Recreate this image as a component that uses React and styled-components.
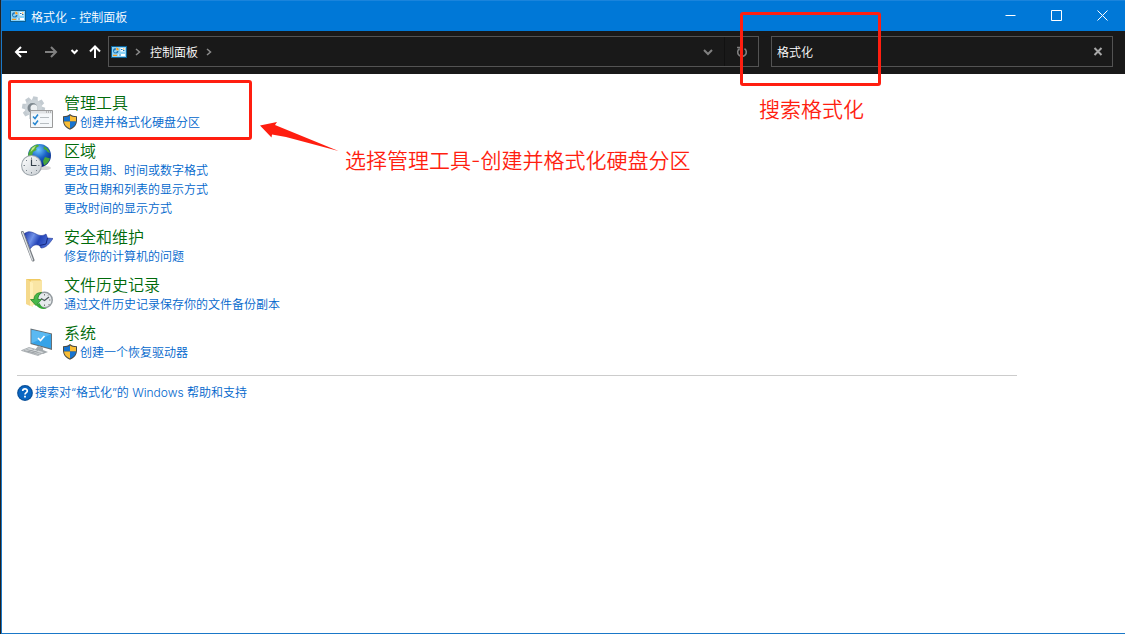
import React, { useState } from 'react';
import styled, { createGlobalStyle } from 'styled-components';

const results = [
	{ title: '管理工具', icon: ToolsIcon, marked: true, links: [{ text: '创建并格式化硬盘分区', shield: true }] },
	{
		title: '区域',
		icon: RegionIcon,
		links: [{ text: '更改日期、时间或数字格式' }, { text: '更改日期和列表的显示方式' }, { text: '更改时间的显示方式' }],
	},
	{ title: '安全和维护', icon: FlagIcon, links: [{ text: '修复你的计算机的问题' }] },
	{ title: '文件历史记录', icon: HistoryIcon, links: [{ text: '通过文件历史记录保存你的文件备份副本' }] },
	{ title: '系统', icon: SystemIcon, links: [{ text: '创建一个恢复驱动器', shield: true }] },
];

function App() {
	const [keyword, setKeyword] = useState('格式化');

	return (
		<Desktop>
			<GlobalStyle />
			<Window>
				<TitleBar>
					<PanelIcon />
					<Title>格式化 - 控制面板</Title>
					<WindowButton aria-label="最小化">
						<LineIcon d="M1.5 5.5H11.5" />
					</WindowButton>
					<WindowButton aria-label="最大化">
						<LineIcon d="M1.5 0.5H11.5V10.5H1.5Z" />
					</WindowButton>
					<WindowButton aria-label="关闭">
						<LineIcon d="M1.5 0.5L11.5 10.5M11.5 0.5L1.5 10.5" />
					</WindowButton>
				</TitleBar>

				<NavBar>
					<NavButton $width={30} aria-label="后退">
						<ArrowIcon d="M13 7H2.5M7 2L2 7L7 12" />
					</NavButton>
					<NavButton $width={30} $dim aria-label="前进">
						<ArrowIcon d="M1 7H11.5M7 2L12 7L7 12" />
					</NavButton>
					<NavButton $width={16} aria-label="最近浏览的位置">
						<ArrowIcon d="M4.5 5L7.5 8L10.5 5" />
					</NavButton>
					<NavButton $width={26} aria-label="上移">
						<ArrowIcon d="M7 13V2M2 6.5L7 1.5L12 6.5" />
					</NavButton>
					<AddressBar>
						<PanelIcon />
						<Chevron />
						<Crumb type="button">控制面板</Crumb>
						<Chevron />
						<Spacer />
						<NavButton $width={32} $dim aria-label="历史地址">
							<ArrowIcon d="M3 5L7 9L11 5" />
						</NavButton>
						<RefreshButton $width={34} $dim aria-label="刷新">
							<svg width="14" height="14" viewBox="0 0 14 14" fill="none" stroke="currentColor" strokeWidth="1.6">
								<path d="M9.5 3.6A4.3 4.3 0 1 1 4.5 3.6" />
								<path d="M2 2.5H5.5V6" />
							</svg>
						</RefreshButton>
					</AddressBar>
					<SearchBox>
						<SearchInput aria-label="搜索控制面板" value={keyword} onChange={e => setKeyword(e.target.value)} />
						<NavButton $width={28} $light aria-label="清除" onClick={() => setKeyword('')}>
							<ArrowIcon d="M3.5 3L10.5 10M10.5 3L3.5 10" />
						</NavButton>
						<SearchMark />
						<SearchNote>搜索格式化</SearchNote>
					</SearchBox>
				</NavBar>

				<Content>
					<ResultList>
						{results.map(({ title, icon: Icon, links, marked }) => (
							<Result key={title}>
								<Icon />
								<ResultBody>
									<ResultTitle>
										<TitleLink href="#">{title}</TitleLink>
									</ResultTitle>
									{links.map(link => (
										<TaskLink href="#" key={link.text}>
											{link.shield && <ShieldIcon />}
											{link.text}
										</TaskLink>
									))}
								</ResultBody>
								{marked && (
									<>
										<ResultMark />
										<PointerArrow width="80" height="30" viewBox="0 0 80 30">
											<path d="M0 5.500L17 2L15 5L78.500 31L26 17L12 14.500L11.500 17.500Z" />
										</PointerArrow>
										<ResultNote>选择管理工具-创建并格式化硬盘分区</ResultNote>
									</>
								)}
							</Result>
						))}
					</ResultList>
					<Divider />
					<HelpLink href="#">
						<HelpIcon />
						搜索对“格式化”的 Windows 帮助和支持
					</HelpLink>
				</Content>
			</Window>
		</Desktop>
	);
}

export default App;

function LineIcon({ d }) {
	return (
		<svg width="12" height="12" viewBox="0 0 12 12" fill="none" stroke="currentColor">
			<path d={d} />
		</svg>
	);
}

function ArrowIcon({ d }) {
	return (
		<svg width="14" height="14" viewBox="0 0 14 14" fill="none" stroke="currentColor" strokeWidth="2">
			<path d={d} />
		</svg>
	);
}

function Chevron() {
	return (
		<ChevronSvg width="6" height="8" viewBox="0 0 6 8" fill="none" stroke="#8c8c8c" strokeWidth="1.5">
			<path d="M1 1L4.500 4L1 7" />
		</ChevronSvg>
	);
}

function PanelIcon() {
	return (
		<FixedSvg width="16" height="12" viewBox="0 0 16 12">
			<path fill="#0b5f94" d="M0 0H16V12H0Z" />
			<path fill="#8bd3f8" d="M1 1H15V11H1Z" />
			<circle cx="4.800" cy="4.800" r="2.800" fill="#dff3ff" />
			<path fill="#1976b8" d="M4.800 4.800V2A2.800 2.800 0 1 0 7.600 4.800Z" />
			<circle cx="4.400" cy="5.200" r="1.300" fill="#8bd3f8" />
			<path fill="#f39a1e" d="M5.300 4.200V1.600A2.700 2.700 0 0 1 7.900 4.200Z" />
			<path fill="#fff" d="M9.500 2H14V5.500H9.500ZM7.500 8H14V10H7.500Z" />
			<path fill="#1976b8" d="M10 3H11.500V4H10ZM12 4H13.500V5H12ZM8 8.500H10V9.500H8Z" />
			<path fill="#f39a1e" d="M2 8.700H6V10H2ZM12 2.500H13.500V3.500H12Z" />
		</FixedSvg>
	);
}

function ShieldIcon() {
	return (
		<ShieldSvg width="16" height="16" viewBox="0 1 16 16">
			<path fill="#4a4a42" d="M6 0C7.800 1.500 10 2.200 13 2.200V6.500C13 11 10 14 6 15.700C2 14 -1 11 -1 6.500V2.200C2 2.200 4.200 1.500 6 0Z" />
			<path fill="#1673cf" d="M6 1.500V7.500H0V3.100C2.500 3 4.500 2.500 6 1.500Z" />
			<path fill="#f9bd35" d="M6 1.500V7.500H12V3.100C9.500 3 7.500 2.500 6 1.500Z" />
			<path fill="#f9bd35" d="M0 7.500H6V14.500C2.500 13 0.300 10.800 0 7.500Z" />
			<path fill="#1673cf" d="M12 7.500H6V14.500C9.500 13 11.700 10.800 12 7.500Z" />
		</ShieldSvg>
	);
}

function HelpIcon() {
	return (
		<FixedSvg width="16" height="16" viewBox="0 0 16 16">
			<circle cx="8" cy="8" r="7.900" fill="#0a4f98" />
			<circle cx="8" cy="8" r="6.700" fill="#0a66c2" />
			<path d="M5.700 6.100C5.700 3.200 10.300 3.200 10.300 6C10.300 7.600 8 7.700 8 9.500" fill="none" stroke="#fff" strokeWidth="1.700" />
			<path d="M7.100 10.800H8.900V12.500H7.100Z" fill="#fff" />
		</FixedSvg>
	);
}

function ToolsIcon() {
	return (
		<ResultIcon viewBox="0 0 32 32">
			<g fill="#c3cbd1">
				{[0, 45, 90, 135].map(angle => (
					<path key={angle} transform={`rotate(${angle + 10} 12.500 12)`} d="M10.300 0.500H14.700L15.500 5V19L14.700 23.500H10.300L9.500 19V5Z" />
				))}
			</g>
			<circle cx="12.500" cy="12" r="8.500" fill="#ccd3d8" />
			<circle cx="11.500" cy="12" r="5" fill="#7d878e" />
			<circle cx="13" cy="12" r="3.500" fill="#eef1f3" />
			<path d="M9.500 14.500H31.500V31.500H9.500Z" fill="#f5f8fa" stroke="#9a9a9a" />
			<path d="M10 15H31V17.500H10Z" fill="#e0e3e5" />
			<path d="M25 16H26M27 16H28M29 16H30" stroke="#888" />
			<path d="M12 20.500L14 22.500L17 18.500M12 26.500L14 28.500L17 24.500" fill="none" stroke="#2686d0" strokeWidth="1.500" />
			<path d="M19 21.500H28M19 27.500H28" stroke="#b7bdc1" />
		</ResultIcon>
	);
}

function RegionIcon() {
	return (
		<ResultIcon viewBox="0 0 32 32">
			<defs>
				<radialGradient id="ocean" cx="0.450" cy="0.250" r="0.750">
					<stop offset="0" stopColor="#6cc7ff" />
					<stop offset="0.500" stopColor="#1a61c4" />
					<stop offset="1" stopColor="#07217c" />
				</radialGradient>
				<linearGradient id="dial" x1="0" y1="0" x2="1" y2="1">
					<stop offset="0" stopColor="#fff" />
					<stop offset="1" stopColor="#c8ced3" />
				</linearGradient>
			</defs>
			<ellipse cx="23" cy="24" rx="7" ry="2" fill="#bbb" opacity="0.600" />
			<circle cx="18.500" cy="11.500" r="11.500" fill="url(#ocean)" />
			<path fill="#51ad35" d="M8 8C10 3 13 1 17 0.500L18 2L15 4L15.500 6L12 8L11 12L7.500 14C7 12 7 10 8 8Z" />
			<path fill="#c4e88c" d="M11 4L15 1.500L13 5L9.500 8Z" />
			<path fill="#48a63b" d="M23 2C26 3.500 28 5.500 29 9L26.500 8L25 6L22.500 5ZM24 13L29 14.500C28 17.500 26 20 23 21.500L22 17Z" />
			<circle cx="10.500" cy="21.500" r="10.500" fill="#9fa7ad" />
			<circle cx="10.500" cy="21.500" r="9.400" fill="url(#dial)" />
			<path stroke="#7b858d" d="M10.500 13.500V15M10.500 28V29.500M2.500 21.500H4M17 21.500H18.500M5 16L6 17M16 16L15 17M5 27L6 26M16 27L15 26" />
			<path fill="none" stroke="#34404b" strokeWidth="1.200" d="M10.500 15.500V21.500H15.500" />
		</ResultIcon>
	);
}

function FlagIcon() {
	return (
		<ResultIcon viewBox="0 0 32 32">
			<defs>
				<linearGradient id="cloth" x1="0" y1="0" x2="1" y2="0.300">
					<stop offset="0" stopColor="#1e36a8" />
					<stop offset="0.350" stopColor="#6f91e8" />
					<stop offset="0.600" stopColor="#2343b8" />
					<stop offset="1" stopColor="#5073d7" />
				</linearGradient>
			</defs>
			<path d="M1.500 2.500L12 30" stroke="#777c82" strokeWidth="3" strokeLinecap="round" />
			<path d="M1.500 2.500L11.500 30" stroke="#dce0e3" strokeWidth="1.300" strokeLinecap="round" />
			<path d="M3.500 3.500C8 0.500 11 2 15 4C19 6 22 6 25 4L26.500 8L32 8.500C28 14 25 18 20 18L18.500 15.500C15 14 12 15 9.500 18.500Z" fill="url(#cloth)" stroke="#1b3196" strokeWidth="0.600" />
			<path d="M18.500 15.500L25 14L26.500 8" fill="none" stroke="#142680" strokeWidth="1" />
		</ResultIcon>
	);
}

function HistoryIcon() {
	return (
		<ResultIcon viewBox="0 0 32 32">
			<path fill="#f0ca62" d="M5 1H19L21 3V27H8L5 25Z" />
			<path fill="#f9e5a4" d="M10 2.500H21V27H10Z" />
			<path fill="#ffefb5" d="M5 1L12 5V29L5 26Z" />
			<path fill="#e5b94e" d="M5 1L9 3.300V28L5 26Z" opacity="0.400" />
			<circle cx="23.500" cy="22" r="8.500" fill="#959ca0" />
			<circle cx="23.500" cy="22" r="7" fill="#e6eaec" />
			<path d="M23.500 16V17.500M23.500 26.500V28M28 22H29.500M27 17.500L28 16.500M27.500 26L28.500 27" stroke="#777" />
			<path d="M20 20.500L23.500 22.500L28 19" fill="none" stroke="#4f575b" strokeWidth="1.200" />
			<path d="M20.500 14.500C15.500 14.500 13 17.500 13 21.500H9.500L15 27.500L20.500 21.500H17C17 18.500 18 16 20.500 14.500Z" fill="#49b84a" stroke="#197c20" strokeWidth="0.700" />
			<path d="M15 27C18 31 23 32 26 30C22 30.500 20 28.500 18.500 25Z" fill="#35a936" />
		</ResultIcon>
	);
}

function SystemIcon() {
	return (
		<ResultIcon viewBox="0 -2 32 32">
			<path fill="#686f73" d="M9.500 0.500L31 5.500V22L9.500 16Z" />
			<path fill="#36a3e8" d="M10.500 1.800L30 6.300V20.500L10.500 15.200Z" />
			<path fill="#69c2f7" d="M10.500 1.800L30 6.300L10.500 15.200Z" opacity="0.700" />
			<path fill="none" stroke="#fff" strokeWidth="1.600" d="M17 10L19.500 12.500L23.500 8" />
			<path fill="#a5acb0" d="M17 18L22 19.500V22L27 24L22 26L14 22Z" />
			<path fill="#d4d8da" stroke="#989ea2" strokeWidth="0.700" d="M0.500 22.500L8 19.500L24 24L17 27.500Z" />
			<path stroke="#90979b" strokeWidth="0.700" d="M3 22.500L18 26.500M5.500 21.500L20.500 25.500M7 24L13 21.500M11 25L17 22.500" />
		</ResultIcon>
	);
}

const GlobalStyle = createGlobalStyle`
	* {
		box-sizing: border-box;
	}

	body {
		margin: 0;
		font-family: Inter, 'Noto Sans CJK SC', sans-serif;
		font-size: 12px;
		font-weight: 350;
	}

	button,
	input {
		font: inherit;
	}

	a {
		text-decoration: none;
	}
`;

const Desktop = styled.div`
	min-height: 100vh;
	padding-left: 1px;
	background-color: #222;
	display: flex;
`;

const Window = styled.div`
	flex: 1;
	display: flex;
	flex-direction: column;
	border-left: 1px solid #1a78c8;
	border-bottom: 1px solid #1a78c8;
	background-color: #fff;
	overflow: hidden;
`;

const TitleBar = styled.header`
	height: 31px;
	padding-left: 8px;
	display: flex;
	align-items: center;
	border-top: 1px solid #1a84dc;
	background-color: #0078d7;
	color: #fff;
`;

const Title = styled.span`
	flex: 1;
	margin-left: 5px;
`;

const WindowButton = styled.button`
	width: 46px;
	height: 30px;
	padding: 0;
	display: flex;
	align-items: center;
	justify-content: center;
	border: none;
	background: none;
	color: #fff;
`;

const NavBar = styled.nav`
	height: 43px;
	padding: 5px 12px 7px 4px;
	display: flex;
	background-color: #191919;
`;

const NavButton = styled.button`
	width: ${props => props.$width}px;
	flex-shrink: 0;
	padding: 0;
	display: flex;
	align-items: center;
	justify-content: center;
	border: none;
	background: none;
	color: ${props => (props.$dim ? '#808080' : props.$light ? '#a8a8a8' : '#fff')};
`;

const AddressBar = styled.div`
	flex: 1;
	padding-left: 2px;
	display: flex;
	align-items: center;
	border: 1px solid #535353;
	color: #fff;

	${NavButton} {
		height: 100%;
	}
`;

const RefreshButton = styled(NavButton)`
	border-left: 1px solid #111;
`;

const Crumb = styled.button`
	padding: 0;
	border: none;
	background: none;
	color: #fff;
`;

const Spacer = styled.div`
	flex: 1;
`;

const SearchBox = styled.div`
	position: relative;
	width: 342px;
	margin-left: 12px;
	display: flex;
	border: 1px solid #535353;
`;

const SearchInput = styled.input`
	flex: 1;
	min-width: 0;
	padding: 0 5px;
	border: none;
	outline: none;
	background: none;
	color: #fff;
`;

const Mark = styled.div`
	position: absolute;
	border: 3px solid #ff1e10;
	border-radius: 3px;
	pointer-events: none;
`;

const SearchMark = styled(Mark)`
	top: -25px;
	left: -32px;
	width: 141px;
	height: 74px;
`;

const ResultMark = styled(Mark)`
	top: -14px;
	left: -13px;
	width: 244px;
	height: 60px;
`;

const Note = styled.span`
	position: absolute;
	font-size: 21px;
	line-height: 30px;
	white-space: nowrap;
	color: #ff1e10;
`;

const SearchNote = styled(Note)`
	top: 58px;
	left: -13px;
`;

const ResultNote = styled(Note)`
	top: 52px;
	left: 324px;
`;

const PointerArrow = styled.svg`
	position: absolute;
	top: 26px;
	left: 239px;
	overflow: visible;
	fill: #ff1e10;
`;

const Content = styled.main`
	flex: 1;
	padding: 20px 15px;
`;

const ResultList = styled.ul`
	margin: 0;
	padding: 0 4px;
	display: flex;
	flex-direction: column;
	gap: 10px;
	list-style: none;
`;

const Result = styled.li`
	position: relative;
	display: flex;
	gap: 11px;
`;

const FixedSvg = styled.svg`
	flex-shrink: 0;
`;

const ResultIcon = styled(FixedSvg)`
	width: 32px;
	height: 32px;
	margin-top: 2px;
`;

const ShieldSvg = styled(FixedSvg)`
	overflow: visible;
`;

const ChevronSvg = styled(FixedSvg)`
	margin: 0 9px 0 8px;
`;

const ResultBody = styled.div`
	display: flex;
	flex-direction: column;
	align-items: flex-start;
`;

const ResultTitle = styled.h2`
	margin: 0;
	font-size: 16px;
	font-weight: 350;
	line-height: 19px;
`;

const TitleLink = styled.a`
	color: #006a0a;
`;

const TaskLink = styled.a`
	display: flex;
	align-items: center;
	line-height: 19px;
	color: #0066cc;
`;

const Divider = styled.hr`
	max-width: 1000px;
	margin: 13px 0 7px;
	border: none;
	border-top: 1px solid #ccc;
`;

const HelpLink = styled.a`
	display: flex;
	align-items: center;
	gap: 2px;
	line-height: 19px;
	color: #0066cc;
`;
